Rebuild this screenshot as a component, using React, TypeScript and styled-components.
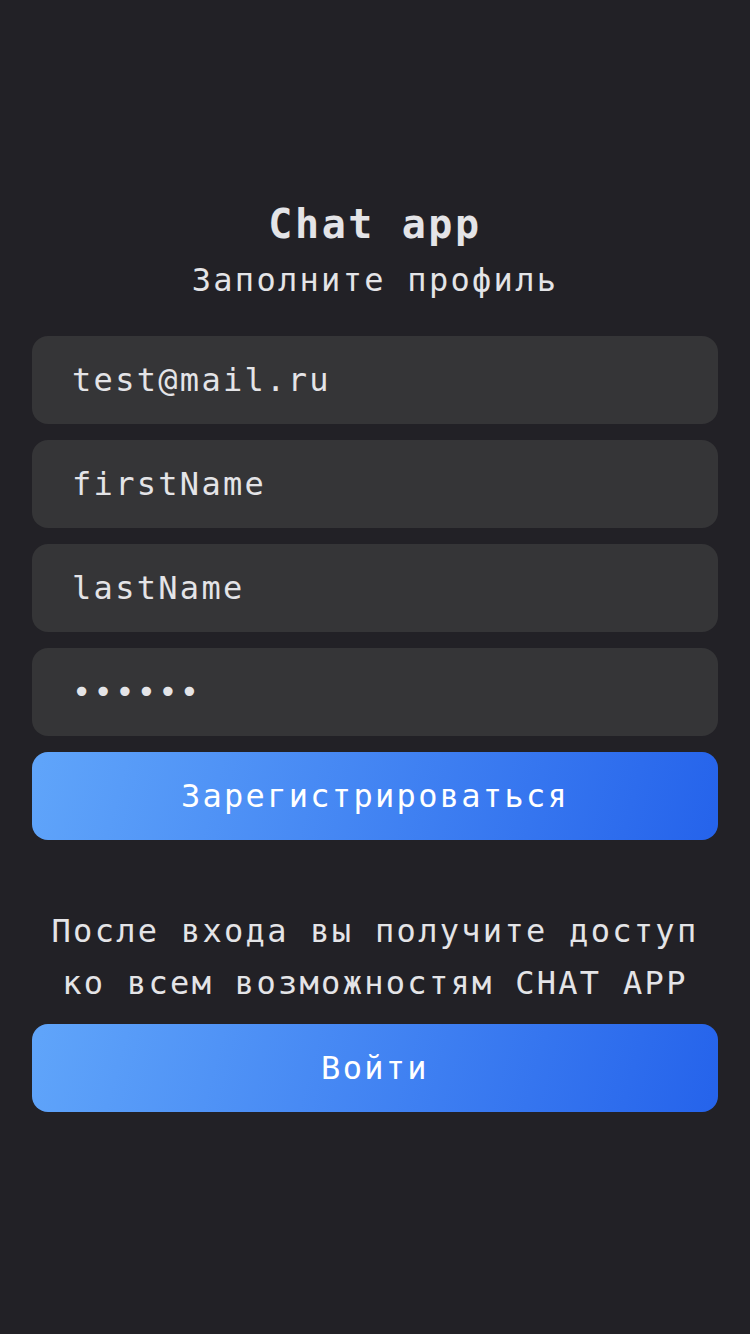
import React from "react";
import styled, { createGlobalStyle } from "styled-components";

const Global = createGlobalStyle`
  html, body { margin: 0; padding: 0; background: #222126; }
  * { box-sizing: border-box; }
`;

const Page = styled.div`
  min-height: 1334px;
  background: #222126;
  padding: 200px 32px 0;
  font-family: "DejaVu Sans Mono", "Liberation Mono", monospace;
  color: #e4e4e7;
  display: flex;
  flex-direction: column;
`;

const Header = styled.header`
  display: flex;
  flex-direction: column;
  align-items: center;
  gap: 12px;
  margin-bottom: 36px;
`;

const Title = styled.h1`
  margin: 0;
  font-size: 40px;
  line-height: 48px;
  font-weight: bold;
  letter-spacing: 2.6px;
  color: #e4e4e7;
`;

const Subtitle = styled.h2`
  margin: 0;
  font-size: 32px;
  line-height: 40px;
  font-weight: normal;
  letter-spacing: 2.3px;
  color: #e4e4e7;
`;

const Form = styled.form`
  display: flex;
  flex-direction: column;
  gap: 16px;
  margin: 0;
`;

const Input = styled.input`
  height: 88px;
  width: 100%;
  border: none;
  outline: none;
  border-radius: 16px;
  background: #353537;
  padding: 0 40px;
  font-family: "DejaVu Sans Mono", "Liberation Mono", monospace;
  font-size: 32px;
  letter-spacing: 2.3px;
  color: #e4e4e7;
`;

const Button = styled.button`
  height: 88px;
  width: 100%;
  border: none;
  border-radius: 16px;
  background: linear-gradient(105deg, #60a5fa 0%, #2563eb 100%);
  color: #ffffff;
  font-family: "DejaVu Sans Mono", "Liberation Mono", monospace;
  font-size: 32px;
  letter-spacing: 2.3px;
  cursor: pointer;
`;

const Note = styled.p<{ $top: number }>`
  margin: ${(p) => p.$top}px 0 15px;
  text-align: center;
  font-size: 32px;
  line-height: 52px;
  letter-spacing: 2.3px;
  color: #e4e4e7;
`;

export default function App() {
  return (
    <>
      <Global />
      <Page>
        <Header>
          <Title>Chat app</Title>
          <Subtitle>Заполните профиль</Subtitle>
        </Header>
        <Form onSubmit={(e) => e.preventDefault()}>
          <Input type="email" defaultValue="test@mail.ru" />
          <Input type="text" defaultValue="firstName" />
          <Input type="text" defaultValue="lastName" />
          <Input type="password" defaultValue="123456" />
          <Button type="submit">Зарегистрироваться</Button>
        </Form>
        <Note $top={65}>
          После входа вы получите доступ ко всем возможностям CHAT APP
        </Note>
        <Button type="button">Войти</Button>
      </Page>
    </>
  );
}
